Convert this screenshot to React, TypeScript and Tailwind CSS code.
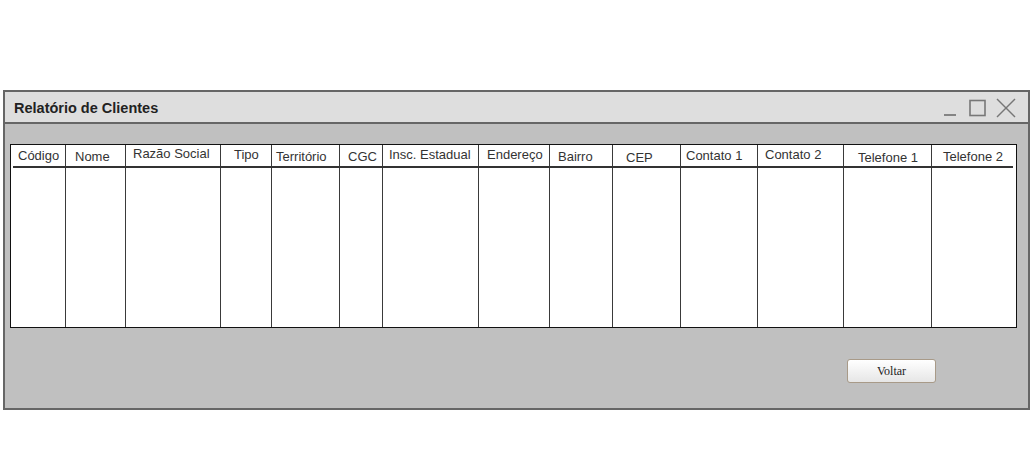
import React from 'react';

interface Column {
  label: string;
  width: string;
  pad: string;
}

const columns: Column[] = [
  { label: 'Código', width: 'w-[54px]', pad: 'pl-[7px] pt-[3px]' },
  { label: 'Nome', width: 'w-[60px]', pad: 'pl-[9px] pt-[4px]' },
  { label: 'Razão Social', width: 'w-[95px]', pad: 'pl-[7px] pt-[1px]' },
  { label: 'Tipo', width: 'w-[51px]', pad: 'pl-[13px] pt-[2px]' },
  { label: 'Território', width: 'w-[68px]', pad: 'pl-[4px] pt-[4px]' },
  { label: 'CGC', width: 'w-[43px]', pad: 'pl-[8px] pt-[4px]' },
  { label: 'Insc. Estadual', width: 'w-[96px]', pad: 'pl-[6px] pt-[2px]' },
  { label: 'Endereço', width: 'w-[71px]', pad: 'pl-[8px] pt-[2px]' },
  { label: 'Bairro', width: 'w-[63px]', pad: 'pl-[8px] pt-[4px]' },
  { label: 'CEP', width: 'w-[68px]', pad: 'pl-[13px] pt-[5px]' },
  { label: 'Contato 1', width: 'w-[77px]', pad: 'pl-[5px] pt-[3px]' },
  { label: 'Contato 2', width: 'w-[86px]', pad: 'pl-[7px] pt-[2px]' },
  { label: 'Telefone 1', width: 'w-[88px]', pad: 'pl-[14px] pt-[5px]' },
  { label: 'Telefone 2', width: 'w-[85px]', pad: 'pl-[11px] pt-[4px]' },
];

const WindowControls: React.FC = () => (
  <svg width="76" height="22" viewBox="0 0 76 22" className="mr-[10px] mt-[2px]">
    <line x1="2" y1="18" x2="14" y2="18" stroke="#666" strokeWidth="1.5" />
    <rect x="28" y="3.5" width="15" height="15" fill="none" stroke="#777" strokeWidth="1.6" />
    <line x1="55" y1="2" x2="73" y2="20" stroke="#777" strokeWidth="1.4" />
    <line x1="73" y1="2" x2="55" y2="20" stroke="#777" strokeWidth="1.4" />
  </svg>
);

const App: React.FC = () => {
  return (
    <div className="h-[467px] w-[1036px] bg-white pt-[90px] pl-[3px] font-['Liberation_Sans',Arial,sans-serif]">
      <div className="w-[1027px] h-[320px] border-2 border-[#666] flex flex-col">
        <div className="h-[32px] bg-[#dedede] border-b-2 border-[#666] flex items-center justify-between">
          <span className="pl-[9px] pt-[3px] text-[14.5px] font-bold text-[#222]">Relatório de Clientes</span>
          <WindowControls />
        </div>
        <div className="flex-1 bg-[#c0c0c0] pl-[5px] pt-[20px]">
          <div className="w-[1007px] h-[184px] bg-white border border-[#111] flex relative">
            <div className="absolute left-[2px] right-[3px] top-[21px] h-[1.5px] bg-[#333]" />
            {columns.map((col, i) => (
              <div
                key={col.label}
                className={`${col.width} h-full ${i > 0 ? 'border-l border-[#3a3a3a]' : ''}`}
              >
                <div className={`${col.pad} text-[13px] leading-[15px] text-[#333] whitespace-nowrap`}>
                  {col.label}
                </div>
              </div>
            ))}
          </div>
          <div className="flex justify-end pr-[92px] mt-[31px]">
            <button className="w-[89px] h-[24px] rounded-[3px] border border-[#a89a88] bg-gradient-to-b from-white to-[#e6e6e6] text-[12px] text-[#222] font-['Liberation_Serif',serif]">
              Voltar
            </button>
          </div>
        </div>
      </div>
    </div>
  );
};

export default App;
